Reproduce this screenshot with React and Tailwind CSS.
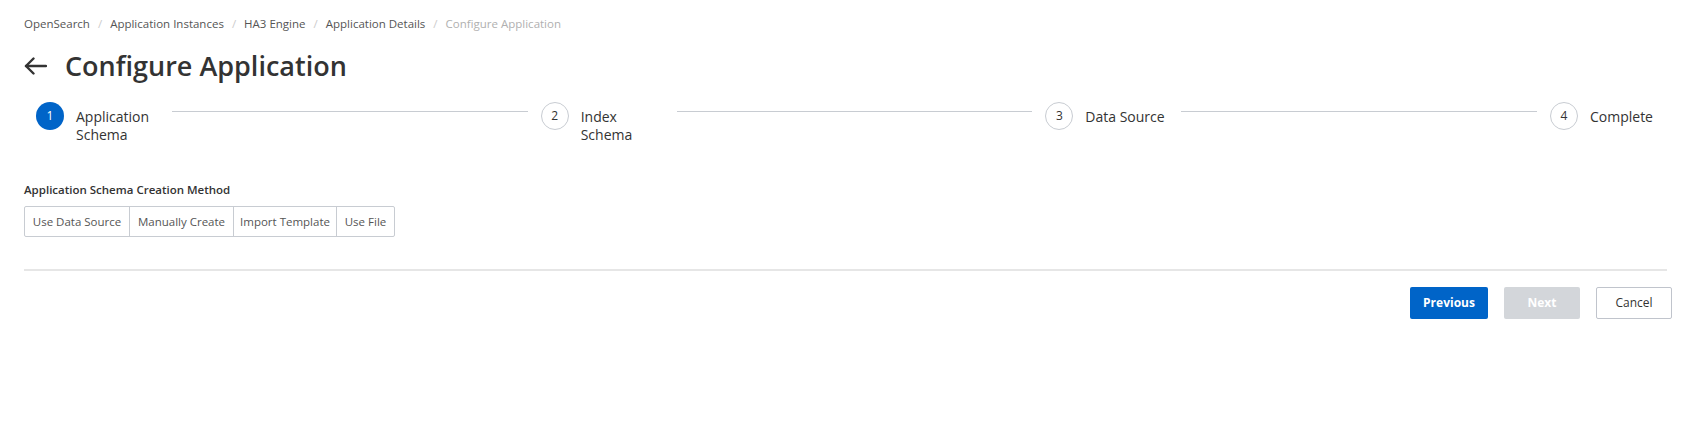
import React from 'react';

const crumbs = ['OpenSearch', 'Application Instances', 'HA3 Engine', 'Application Details'];

const steps = [
  { n: 1, label: ['Application', 'Schema'], active: true, w: 'w-[80px]' },
  { n: 2, label: ['Index', 'Schema'], w: 'w-[80px]' },
  { n: 3, label: ['Data Source'], w: '' },
];

const methods = [
  { text: 'Use Data Source', w: 'w-[104px]' },
  { text: 'Manually Create', w: 'w-[104px]' },
  { text: 'Import Template', w: 'w-[103px]' },
  { text: 'Use File', w: 'w-[58px]' },
];

function StepCircle({ n, active }) {
  return (
    <div
      className={
        active
          ? 'flex h-7 w-7 shrink-0 items-center justify-center rounded-full bg-[#0064c8] text-xs text-white'
          : 'flex h-7 w-7 shrink-0 items-center justify-center rounded-full border border-[#c8ccd2] bg-white text-xs text-[#333]'
      }
    >
      {n}
    </div>
  );
}

export default function App() {
  return (
    <div className="min-h-screen w-full bg-white pl-6 pr-[39px] font-['Open_Sans',sans-serif] text-[#333]">
      {/* breadcrumb */}
      <div className="flex items-center pt-[15px] text-[11.5px] leading-[18px]">
        {crumbs.map((c) => (
          <React.Fragment key={c}>
            <span className="text-[#555]">{c}</span>
            <span className="mx-2 text-[#ccc]">/</span>
          </React.Fragment>
        ))}
        <span className="text-[#b0b0b0]">Configure Application</span>
      </div>

      {/* title */}
      <div className="mt-[15px] flex h-9 items-center gap-[18px]">
        <svg width="23" height="18" viewBox="0 0 23 18" fill="none" stroke="#333" strokeWidth="2.4" strokeLinecap="round" strokeLinejoin="round">
          <path d="M22 9H2" />
          <path d="M9.5 1.5L2 9l7.5 7.5" />
        </svg>
        <h1 className="text-[27px] font-semibold leading-9 text-[#333]">Configure Application</h1>
      </div>

      {/* steps */}
      <div className="mt-[18px] flex pl-3">
        {steps.map((s) => (
          <div key={s.n} className="flex flex-1 items-start">
            <StepCircle n={s.n} active={s.active} />
            <div className={`ml-3 mt-[6px] shrink-0 whitespace-nowrap text-sm leading-[18px] text-[#333] ${s.w}`}>
              {s.label.map((l) => (
                <div key={l}>{l}</div>
              ))}
            </div>
            <div className="ml-4 mr-[13px] mt-[9px] h-px flex-1 bg-[#c8ccd2]" />
          </div>
        ))}
        <div className="flex shrink-0 items-start pr-[14px]">
          <StepCircle n={4} />
          <div className="ml-3 mt-[6px] whitespace-nowrap text-sm leading-[18px] text-[#333]">Complete</div>
        </div>
      </div>

      {/* creation method */}
      <div className="mt-[37px] text-[11.5px] font-semibold leading-[18px] text-[#333]">Application Schema Creation Method</div>
      <div className="mt-[7px] flex h-[31px] w-fit overflow-hidden rounded-[2px] border border-[#c8ccd2]">
        {methods.map((m, i) => (
          <div
            key={m.text}
            className={`flex items-center justify-center whitespace-nowrap text-[11.5px] text-[#555] ${m.w} ${i > 0 ? 'border-l border-[#c8ccd2]' : ''}`}
          >
            {m.text}
          </div>
        ))}
      </div>

      <div className="mt-8 h-[2px] bg-[#e6e6e6]" />

      {/* footer buttons */}
      <div className="-mr-[5px] mt-4 flex justify-end gap-4">
        <button className="h-8 w-[78px] rounded-[2px] bg-[#0064c8] text-xs font-bold text-white">Previous</button>
        <button className="h-8 w-[76px] rounded-[2px] bg-[#d3d6da] text-xs font-bold text-white">Next</button>
        <button className="h-8 w-[76px] rounded-[2px] border border-[#c0c4cc] bg-white text-xs text-[#333]">Cancel</button>
      </div>
    </div>
  );
}
